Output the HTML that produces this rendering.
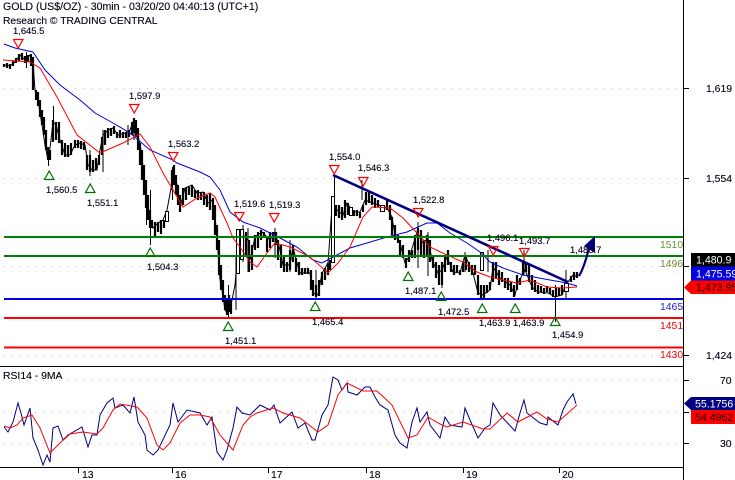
<!DOCTYPE html>
<html><head><meta charset="utf-8"><style>
html,body{margin:0;padding:0;background:#fff;width:735px;height:480px;overflow:hidden}
svg{display:block}
text{font-family:"Liberation Sans",Arial,sans-serif;font-size:9.4px;fill:#000018;stroke:#000018;stroke-width:.12px}
.ax{font-size:10.4px}
.tag{font-size:10.6px;stroke:none}
</style></head><body>
<svg width="735" height="480" viewBox="0 0 735 480" xmlns="http://www.w3.org/2000/svg">
<rect width="735" height="480" fill="#fff"/>
<g stroke="#bdbdbd" stroke-width="1" stroke-dasharray="1 7" fill="none">
<path d="M3 88.5H683M3 178.5H683M3 266.5H683M3 355.5H683M3 380.5H683M3 412.5H683M3 443.5H683"/>
</g>
<!-- candles -->
<path fill="none" stroke="#000" stroke-width="1" d="M4 65 10 66 15 62 20 55 25 60 30 55 33 62 35 90 38 100 42 125 45 145 48 160 50 148 53 122 56 125 60 140 65 155 70 155 75 145 80 143 85 145 88 165 92 170 97 170 100 150 103 135 108 130 113 128 118 135 125 133 130 130 133 122 136 125 138 135 141 150 145 183 147 210 150 222 153 228 158 223 163 220 167 210 172 183 173 170 178 188 180 208 185 188 192 185 197 193 203 192 208 203 212 200 215 217 217 237 220 280 222 290 225 310 228 314 232 300 235 285 237 260 238 230 243 235 248 240 250 260 255 237 262 232 270 240 275 232 280 250 283 265 290 265 293 247 297 263 300 273 310 273 313 293 318 295 322 273 328 263 332 207 337 210 343 215 347 203 353 212 360 212 365 200 373 203 387 208 392 217 395 235 400 243 405 263 410 255 417 232 423 243 428 238 432 260 438 273 442 270 447 257 453 272 460 273 465 255 473 273 478 293 483 295 490 290 493 267 500 278 510 285 515 295 518 283 525 270 532 287 538 292 548 293 555 297 562 295 565 287 568 282 573 275 578 277"/>
<path fill="none" stroke="#000" stroke-width="2.2" d="M4 64V67M7 63V68M10 64V69M13 61V66M16 58V63M19 54V61M22 53V60M25 56V63M28 55V62M31 54V66M33 57V90M36 90V100M38 92V106M40 100V117M42 110V125M44 117V135M46 130V150M48 147V160M50 150V160M53 120V142M56 122V140M59 122V143M62 140V155M65 143V157M68 145V157M71 143V155M75 140V148M78 140V148M81 141V149M84 142V150M87 155V170M90 155V172M93 160V172M96 158V170M99 155V165M102 137V155M105 130V145M108 128V138M111 128V136M114 126V134M117 132V138M120 130V138M123 132V138M126 132V138M129 130V137M132 122V135M134 118V133M136 120V137M138 128V150M140 143V165M142 150V180M144 165V195M146 180V208M148 195V220M150 210V228M152 220V228M155 222V236M158 222V232M161 220V234M164 220V228M172 170V190M174 165V185M176 175V195M178 185V205M180 195V212M183 188V205M186 188V200M189 187V195M192 185V197M195 190V198M198 190V200M201 192V200M204 192V205M207 195V207M210 193V210M213 198V220M215 205V235M217 225V250M219 240V275M221 265V290M223 280V302M225 295V310M227 300V315M229 295V312M231 298V314M243 230V250M246 232V255M249 240V272M252 245V270M255 235V250M258 232V248M261 230V240M264 232V238M267 238V252M270 232V248M273 232V242M276 232V245M278 240V260M281 245V268M284 255V272M287 262V272M290 250V270M293 245V262M296 258V272M299 262V275M302 268V275M305 268V274M308 268V274M311 270V290M313 280V296M316 285V297M319 280V296M322 272V285M325 268V280M328 263V275M330 260V270M336 205V216M339 205V218M342 207V220M345 200V218M348 203V215M351 210V215M354 210V216M357 210V216M360 212V218M363 205V212M366 192V205M369 192V203M372 195V205M375 198V208M378 200V207M384 205V212M387 200V210M390 205V220M392 217V235M395 225V240M398 235V243M400 240V255M403 245V258M406 258V268M409 250V262M412 250V258M415 235V258M418 228V250M421 230V255M424 240V258M427 235V255M430 240V262M433 255V268M436 262V278M439 265V285M442 262V285M445 255V272M448 250V265M451 262V272M454 265V275M457 265V272M460 270V275M463 262V272M466 255V270M469 262V272M472 265V275M475 265V275M478 275V295M481 285V298M484 285V298M487 285V293M490 282V290M493 262V282M496 262V278M499 270V285M502 272V282M505 278V288M508 278V290M511 282V292M514 285V297M517 275V290M520 278V285M523 262V275M526 262V272M529 265V282M532 275V290M535 280V292M538 285V294M541 286V292M544 288V294M547 286V292M550 288V294M553 290V297M556 288V296M559 288V296M562 285V295M571 276V282M574 272V280M577 272V278"/>
<path fill="none" stroke="#000" stroke-width="1" d="M26.5 52V68M53.5 106V125M48.5 148V166M103 130V172M90 150V176M128 125V145M134 118V140M150.5 190V245M146.5 195V225M172.5 167V200M228.5 285V318M236 255V310M243 225V262M248 228V272M275 228V258M290 240V272M316 270V300M334.5 175V262M362 180V200M418 222V268M428 232V276M442 262V288M465 252V272M488 250V272M524 250V275M555.5 285V322M566 270V298"/>
<g fill="#fff" stroke="#000" stroke-width="1"><rect x="165.5" y="211.5" width="3" height="10"/><rect x="236.5" y="229.5" width="3" height="44"/><rect x="240.5" y="229.5" width="3" height="30"/><rect x="331.5" y="196.5" width="3" height="66"/><rect x="349.5" y="207.5" width="3" height="8"/><rect x="380.5" y="205.5" width="4" height="6"/><rect x="480.5" y="252.5" width="3" height="18"/><rect x="564.5" y="283.5" width="4" height="8"/></g>
<!-- MAs -->
<polyline fill="none" stroke="#0000d8" stroke-width="1" points="4,44 15,48 33,52 45,70 60,85 80,100 95,113 113,123 130,133 150,150 173,160 177,163 200,172 210,177 220,190 230,212 243,222 260,228 280,238 297,247 313,260 322,263 333,257 350,248 367,243 387,237 407,232 427,223 437,223 450,233 467,243 480,252 490,262 503,268 523,275 550,280 567,283 577,286"/>
<polyline fill="none" stroke="#ff0000" stroke-width="1" points="3,60 30,62 40,68 57,97 77,135 100,153 123,143 140,134 150,147 163,173 183,207 197,198 210,193 215,197 227,223 233,238 240,247 250,262 257,267 267,253 275,243 290,247 310,257 328,273 338,263 350,247 363,217 372,207 390,208 403,218 417,233 430,247 447,255 463,262 477,272 490,277 503,280 517,283 530,280 547,287 562,288 577,287"/>
<!-- levels -->
<g fill="none" stroke-width="2">
<path stroke="#008000" d="M4 237H683M4 256H683"/>
<path stroke="#0000e0" d="M4 299H683"/>
<path stroke="#ff0000" d="M4 318H683M4 347.5H683"/>
</g>
<!-- trend + forecast -->
<path d="M333 175L568 282" stroke="#000080" stroke-width="2.6" fill="none"/>
<path d="M579 276Q584 268 589 248" stroke="#000080" stroke-width="2.2" fill="none"/>
<path d="M595 236L584 246 595 253Z" fill="#000080"/>
<!-- triangles -->
<g fill="none" stroke="#ff0000" stroke-width="1.2">
<path d="M13.5 39.5H23L18.2 48Z"/><path d="M129.5 104.5H139L134.2 113Z"/><path d="M168.5 152.5H178L173.2 161Z"/><path d="M234.5 212.5H244L239.2 221Z"/><path d="M269.5 213.5H279L274.2 222Z"/><path d="M329.5 165.5H339L334.2 174Z"/><path d="M358.5 177.5H368L363.2 186Z"/><path d="M413.5 208.5H423L418.2 217Z"/><path d="M488.5 246.5H498L493.2 255Z"/><path d="M519.5 248.5H529L524.2 257Z"/>
</g>
<g fill="none" stroke="#007000" stroke-width="1.2">
<path d="M44.5 179.5H54L49.2 171Z"/><path d="M85.5 192.5H95L90.2 184Z"/><path d="M145.5 256.5H155L150.2 248Z"/><path d="M223.5 330.5H233L228.2 322Z"/><path d="M310.5 310.5H320L315.2 302Z"/><path d="M403.5 280.5H413L408.2 272Z"/><path d="M436.5 300.5H446L441.2 292Z"/><path d="M477.5 312.5H487L482.2 304Z"/><path d="M510.5 312.5H520L515.2 304Z"/><path d="M550.5 325.5H560L555.2 317Z"/>
</g>
<!-- RSI -->
<polyline fill="none" stroke="#000080" stroke-width="1" points="4,427 8,432 13,422 18,403 21,413 24,425 30,408 33,438 38,450 43,465 47,455 50,462 53,428 58,426 63,440 68,435 82,427 88,447 92,435 97,435 100,415 107,403 113,398 115,408 123,405 130,413 134,397 138,422 145,435 147,450 153,455 158,450 170,425 173,403 178,422 187,410 200,413 207,425 212,417 217,452 223,460 227,450 233,428 237,407 242,413 250,415 260,405 270,410 274,405 280,423 292,412 298,428 305,423 312,440 315,440 322,415 328,405 333,377 338,380 342,390 347,383 348,392 357,395 365,387 370,387 375,397 380,405 388,410 395,435 400,443 407,448 412,422 417,408 420,422 427,412 430,425 440,438 445,417 450,425 462,427 465,408 470,420 478,438 485,428 490,425 493,403 500,415 515,431 520,413 524,400 527,413 540,423 547,425 548,417 558,425 563,410 567,402 573,394 576,404"/>
<polyline fill="none" stroke="#ff0000" stroke-width="1" points="4,426 10,428 17,425 23,418 32,415 40,428 50,453 60,443 70,434 83,432 97,434 103,428 113,410 120,404 137,407 147,418 157,445 163,450 170,443 180,423 190,415 200,415 210,417 220,435 233,450 243,425 250,417 257,413 273,408 283,413 300,418 318,432 328,425 338,395 347,383 363,391 377,391 392,405 408,438 417,435 428,417 440,424 447,427 463,422 483,429 490,429 507,413 518,422 537,412 547,419 558,422 577,405"/>
<!-- frame -->
<path d="M683.5 0V480M0 366.5H683M0 467.5H683" stroke="#000" stroke-width="1" fill="none"/>
<path d="M683 88.5H689M683 178.5H689M683 266.5H689M683 355.5H689M683 380.5H689M683 412.5H689M683 443.5H689M78.5 467V473M172.5 467V473M268.5 467V473M366.5 467V473M463.5 467V473M559.5 467V473" stroke="#000" stroke-width="1" fill="none"/>
<!-- header -->
<text x="3" y="10" style="font-size:10.6px">GOLD (US$/OZ) - 30min - 03/20/20 04:40:13 (UTC+1)</text>
<text x="3" y="24" style="font-size:10.3px">Research © TRADING CENTRAL</text>
<text x="3" y="379" style="font-size:10.4px">RSI14 - 9MA</text>
<!-- price labels -->
<text x="13" y="34">1,645.5</text><text x="129" y="99">1,597.9</text><text x="168" y="147">1,563.2</text><text x="46" y="193">1,560.5</text><text x="87" y="206">1,551.1</text><text x="147" y="270">1,504.3</text><text x="234" y="207">1,519.6</text><text x="269" y="208">1,519.3</text><text x="225" y="344">1,451.1</text><text x="329" y="160">1,554.0</text><text x="358" y="171">1,546.3</text><text x="413" y="203">1,522.8</text><text x="312" y="325">1,465.4</text><text x="405" y="294">1,487.1</text><text x="438" y="315">1,472.5</text><text x="479" y="326">1,463.9</text><text x="513" y="326">1,463.9</text><text x="552" y="338">1,454.9</text><text x="487" y="241">1,496.1</text><text x="519" y="244">1,493.7</text><text x="570" y="253">1,486.7</text>
<!-- level labels -->
<text class="ax" x="660" y="248" style="fill:#6f8f2f;stroke:none">1510</text>
<text class="ax" x="660" y="267" style="fill:#6f8f2f;stroke:none">1496</text>
<text class="ax" x="660" y="310" style="fill:#2020e0;stroke:none">1465</text>
<text class="ax" x="660" y="329" style="fill:#f00000;stroke:none">1451</text>
<text class="ax" x="660" y="358" style="fill:#f00000;stroke:none">1430</text>
<!-- axis labels -->
<text class="ax" x="706" y="92">1,619</text><text class="ax" x="706" y="182">1,554</text><text class="ax" x="706" y="359">1,424</text>
<text class="ax" x="720" y="384">70</text><text class="ax" x="720" y="447">30</text>
<!-- dates -->
<text class="ax" x="82" y="478">13</text><text class="ax" x="175" y="478">16</text><text class="ax" x="271" y="478">17</text><text class="ax" x="369" y="478">18</text><text class="ax" x="466" y="478">19</text><text class="ax" x="562" y="478">20</text>
<!-- tags -->
<rect x="691" y="253" width="44" height="13.5" fill="#000"/>
<rect x="691" y="266.5" width="44" height="14" fill="#0000e0"/>
<path d="M684 287.5L691 280.5H735V294H691Z" fill="#ff0000"/>
<text class="tag" x="696" y="263.5" style="fill:#fff">1,480.9</text>
<text class="tag" x="696" y="277.5" style="fill:#fff">1,475.59</text>
<text class="tag" x="696" y="291" style="fill:#200000">1,473.95</text>
<path d="M684 403.5L691 397H735V410H691Z" fill="#000080"/>
<rect x="691" y="410" width="44" height="14" fill="#ff0000"/>
<text class="tag" x="695" y="407.5" style="fill:#fff">55.1756</text>
<text class="tag" x="695" y="421" style="fill:#200000">54.4962</text>
</svg>
</body></html>
